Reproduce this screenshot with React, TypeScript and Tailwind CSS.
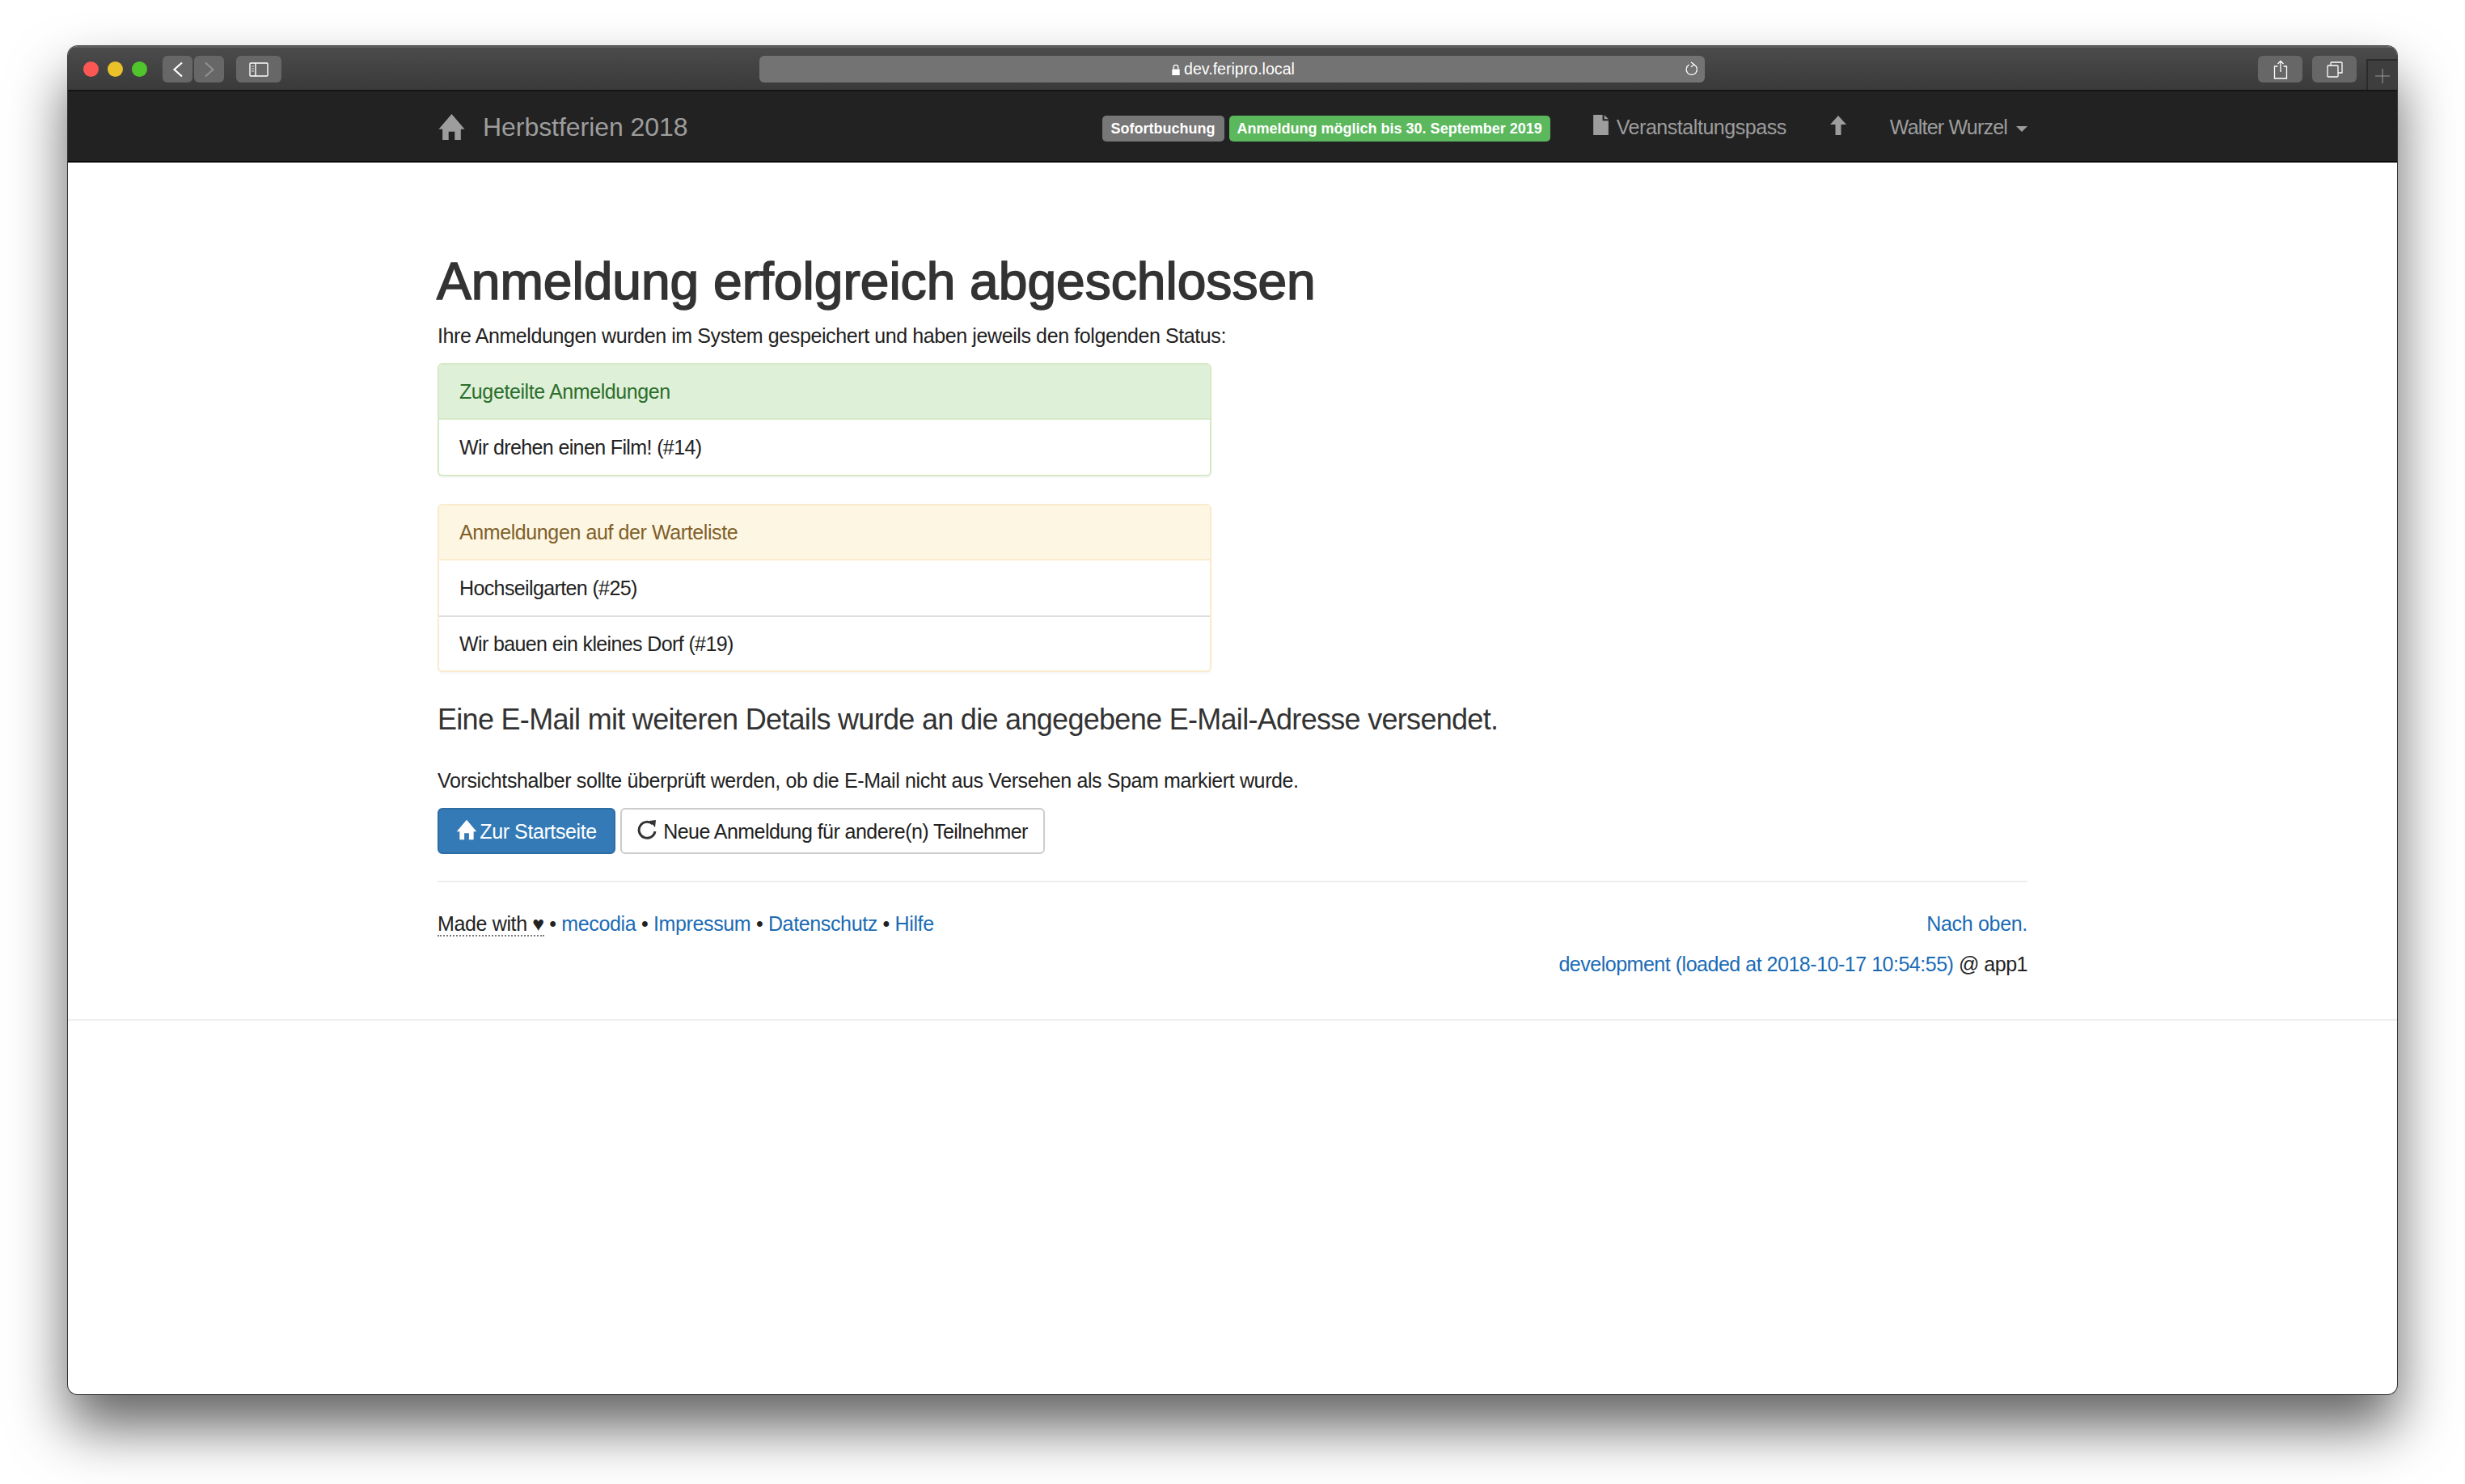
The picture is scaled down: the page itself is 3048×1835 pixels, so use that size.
const HomeIcon = ({ className }: { className: string }) => (
  <svg viewBox="0 0 36 36" className={className} fill="currentColor">
    <path d="M18 1 L35 21 L30 21 L30 35 L22 35 L22 24 L14 24 L14 35 L6 35 L6 21 L1 21 Z" />
  </svg>
);

const Panel = ({
  title,
  items,
  headClass,
  borderClass,
}: {
  title: string;
  items: string[];
  headClass: string;
  borderClass: string;
}) => (
  <div className={`w-[957px] rounded-[6px] border-2 bg-white shadow-[0_2px_2px_rgba(0,0,0,0.04)] overflow-hidden ${borderClass}`}>
    <div className={`h-[68px] flex items-center px-[25px] border-b-2 ${headClass} ${borderClass}`}>{title}</div>
    {items.map((item, i) => (
      <div key={item} className={`h-[68px] flex items-center px-[25px] text-[#222] tracking-[-0.62px] ${i > 0 ? "border-t-2 border-[#ddd]" : ""}`}>
        {item}
      </div>
    ))}
  </div>
);

const ToolBtn = ({ className, children }: { className: string; children: React.ReactNode }) => (
  <div className={`h-[33px] rounded-[6px] bg-[#676767] flex items-center justify-center ${className}`}>{children}</div>
);

export default function App() {
  return (
    <div className="w-[3048px] h-[1835px] bg-white pt-[57px] pl-[84px] overflow-hidden font-['Liberation_Sans',Arial,sans-serif]">
      <div className="w-[2880px] h-[1667px] rounded-[12px] bg-white overflow-hidden flex flex-col shadow-[0_40px_70px_rgba(0,0,0,0.62),0_0_0_1px_rgba(40,40,40,0.85)]">
        {/* Safari toolbar */}
        <div className="h-[56px] shrink-0 flex items-start pt-[10px] pl-[19px] bg-gradient-to-b from-[#4b4b4b] to-[#3a3a3a] border-t-2 border-[#5e5e5e] border-b-2 border-b-[#151515] relative">
          <div className="flex gap-[11px] mt-[7px] mr-[19px]">
            <div className="w-[19px] h-[19px] rounded-full bg-[#fc5753]" />
            <div className="w-[19px] h-[19px] rounded-full bg-[#ebc12a]" />
            <div className="w-[19px] h-[19px] rounded-full bg-[#50c62c]" />
          </div>
          <ToolBtn className="w-[37px]">
            <svg viewBox="0 0 14 20" className="w-[14px] h-[20px]" fill="none" stroke="#fff" strokeWidth="2.2"><path d="M12 1.5 L2.5 10 L12 18.5" /></svg>
          </ToolBtn>
          <ToolBtn className="w-[37px] ml-[2px] mr-[15px]">
            <svg viewBox="0 0 14 20" className="w-[14px] h-[20px]" fill="none" stroke="#8f8f8f" strokeWidth="2.2"><path d="M2 1.5 L11.5 10 L2 18.5" /></svg>
          </ToolBtn>
          <ToolBtn className="w-[56px]">
            <svg viewBox="0 0 24 18" className="w-[24px] h-[18px]" fill="none" stroke="#fff" strokeWidth="1.4">
              <rect x="1" y="1" width="22" height="16" rx="1" />
              <path d="M8 1 V17" />
              <path d="M3 5 H6 M3 8 H6 M3 11 H6" strokeWidth="1.2" stroke="#ddd" />
            </svg>
          </ToolBtn>
          <div className="ml-[591px] w-[1169px] h-[33px] rounded-[6px] bg-[#737373] flex items-center relative text-white">
            <div className="flex-1 flex items-center justify-center gap-[4px] text-[19.6px] leading-none text-[#fff] pt-[1px] pl-[2px]">
              <svg viewBox="0 0 12 16" className="w-[12px] h-[15px]" fill="#fff">
                <path d="M1 7 H11 V15 H1 Z" />
                <path d="M3 7 V4.5 a3 3 0 0 1 6 0 V7" fill="none" stroke="#fff" strokeWidth="1.4" />
              </svg>
              <span>dev.feripro.local</span>
            </div>
            <svg viewBox="0 0 18 20" className="absolute right-[8px] top-[7px] w-[17px] h-[19px]" fill="none" stroke="#fff" strokeWidth="1.3">
              <path d="M12.5 4.2 A7 7 0 1 1 6 4.2" />
              <path d="M8.5 1 L12.5 4 L8.5 7" />
            </svg>
          </div>
          <ToolBtn className="w-[55px] ml-[684px]">
            <svg viewBox="0 0 18 24" className="w-[18px] h-[24px]" fill="none" stroke="#fff" strokeWidth="1.3">
              <path d="M5.5 8 H1.5 V23 H16.5 V8 H12.5" />
              <path d="M9 15 V1.5 M5.5 5 L9 1.5 L12.5 5" />
            </svg>
          </ToolBtn>
          <ToolBtn className="w-[55px] ml-[12px]">
            <svg viewBox="0 0 20 20" className="w-[20px] h-[20px]" fill="none" stroke="#fff" strokeWidth="1.3">
              <rect x="1" y="5" width="13" height="14" rx="1" />
              <path d="M5 5 V2 a1 1 0 0 1 1 -1 H18 a1 1 0 0 1 1 1 V14 H14" />
            </svg>
          </ToolBtn>
          <div className="absolute right-0 bottom-0 w-[38px] h-[38px] bg-[#3e3e3e] border-l-2 border-t-2 border-[#2b2b2b] flex items-center justify-center">
            <svg viewBox="0 0 18 18" className="w-[18px] h-[18px] mt-[2px]" stroke="#9a9a9a" strokeWidth="1"><path d="M9 0 V18 M0 9 H18" /></svg>
          </div>
        </div>

        {/* Navbar */}
        <div className="h-[88px] shrink-0 bg-[#222] border-b-2 border-[#080808] flex items-center px-[457px] text-[#9d9d9d] text-[25px] tracking-[-0.5px]">
          <HomeIcon className="w-[35px] h-[34px] mr-[21px] mt-[2px]" />
          <span className="text-[32px] tracking-[-0.05px] mt-[2px]">Herbstferien 2018</span>
          <div className="flex-1" />
          <span className="h-[32px] flex items-center px-[11px] rounded-[5px] bg-[#777] text-white font-bold text-[18px] tracking-normal mt-[6px]">Sofortbuchung</span>
          <span className="h-[32px] flex items-center px-[10px] rounded-[5px] bg-[#5cb85c] text-white font-bold text-[18px] tracking-normal ml-[6px] mt-[6px]">Anmeldung möglich bis 30. September 2019</span>
          <svg viewBox="0 0 18 24" className="w-[19px] h-[25px] ml-[53px] mr-[10px] -mt-[4px]" fill="currentColor">
            <path d="M0 0 H11 V7 H18 V24 H0 Z" />
            <path d="M13 0 L18 5 H13 Z" />
          </svg>
          <span className="mt-[3px] tracking-[-0.45px]">Veranstaltungspass</span>
          <svg viewBox="0 0 20 24" className="w-[20px] h-[24px] ml-[54px] mr-[54px] -mt-[2px]" fill="currentColor">
            <path d="M10 0 L20 11 H13.5 V24 H6.5 V11 H0 Z" />
          </svg>
          <span className="mt-[3px] tracking-[-0.8px]">Walter Wurzel</span>
          <span className="ml-[11px] w-0 h-0 border-x-[7px] border-x-transparent border-t-[7px] border-t-[#9d9d9d] mt-[6px]" />
        </div>

        {/* Content */}
        <div className="px-[457px] pt-[112px] text-[25px] tracking-[-0.4px] leading-[36px] text-[#222]">
          <h1 className="text-[64.1px] -ml-[1px] tracking-normal leading-[70px] text-[#333] [-webkit-text-stroke:1.6px_#333]">Anmeldung erfolgreich abgeschlossen</h1>
          <p className="mt-[14px]">Ihre Anmeldungen wurden im System gespeichert und haben jeweils den folgenden Status:</p>
          <div className="mt-[16px] flex flex-col gap-[34px]">
            <Panel title="Zugeteilte Anmeldungen" items={["Wir drehen einen Film! (#14)"]} headClass="bg-[#dff0d8] text-[#2c6e2c]" borderClass="border-[#d6e9c6]" />
            <Panel title="Anmeldungen auf der Warteliste" items={["Hochseilgarten (#25)", "Wir bauen ein kleines Dorf (#19)"]} headClass="bg-[#fdf6e3] text-[#80602a]" borderClass="border-[#faebcc]" />
          </div>
          <p className="mt-[34px] text-[36px] tracking-[-0.7px] leading-[50px] text-[#333]">Eine E-Mail mit weiteren Details wurde an die angegebene E-Mail-Adresse versendet.</p>
          <p className="mt-[32px] tracking-[-0.38px]">Vorsichtshalber sollte überprüft werden, ob die E-Mail nicht aus Versehen als Spam markiert wurde.</p>
          <div className="mt-[16px] flex gap-[6px]">
            <button className="h-[57px] w-[220px] rounded-[6px] bg-[#337ab7] border-2 border-[#2e6da4] text-white flex items-center justify-center gap-[3px] whitespace-nowrap">
              <HomeIcon className="w-[26px] h-[26px] -mt-[3px]" />
              Zur Startseite
            </button>
            <button className="h-[57px] w-[525px] rounded-[6px] bg-white border-2 border-[#ccc] text-[#222] flex items-center justify-center gap-[8px] whitespace-nowrap tracking-[-0.55px]">
              <svg viewBox="0 0 24 26" className="w-[24px] h-[26px] -mt-[3px]" fill="none" stroke="#333" strokeWidth="3">
                <path d="M19 6 A10 10 0 1 0 22 15" />
                <path d="M15 2 L23 1 L22 10 Z" fill="#333" stroke="none" />
              </svg>
              Neue Anmeldung für andere(n) Teilnehmer
            </button>
          </div>
          <div className="mt-[33px] border-t-2 border-[#eee] pt-[33px] flex justify-between">
            <div className="tracking-[-0.36px]">
              <span className="border-b-2 border-dotted border-[#777]">Made with ♥</span> • <a className="text-[#1a6bb5]">mecodia</a> • <a className="text-[#1a6bb5]">Impressum</a> • <a className="text-[#1a6bb5]">Datenschutz</a> • <a className="text-[#1a6bb5]">Hilfe</a>
            </div>
            <div className="text-right tracking-[-0.48px]">
              <a className="text-[#1a6bb5] tracking-[-0.3px]">Nach oben.</a>
              <div className="mt-[14px]"><a className="text-[#1a6bb5]">development (loaded at 2018-10-17 10:54:55)</a> @ app1</div>
            </div>
          </div>
        </div>
        <div className="mt-[50px] border-t-2 border-[#eee]" />
      </div>
    </div>
  );
}
